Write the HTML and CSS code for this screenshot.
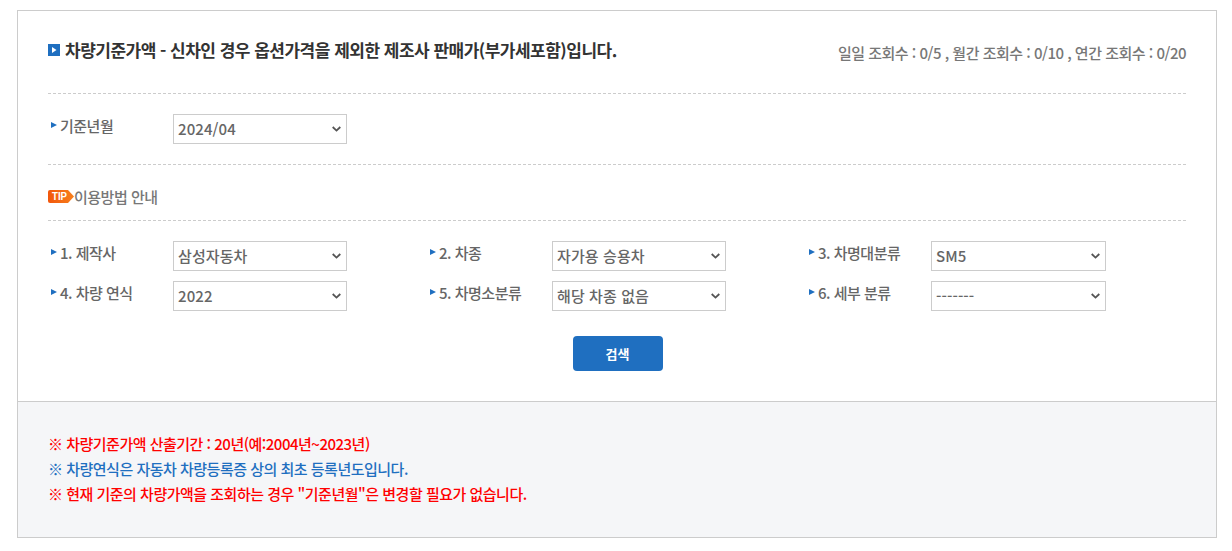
FILE: index.html
```html
<!DOCTYPE html>
<html lang="ko">
<head>
<meta charset="utf-8">
<title>차량기준가액</title>
<link rel="stylesheet" href="styles.css">
</head>
<body>
<div class="box">
  <div class="main">
    <div class="head">
      <h2 class="title">
        <svg class="title-icon" width="12" height="12" viewBox="0 0 12 12"><rect width="12" height="12" fill="#1f6fc0"/><path d="M4 3l4.500 3L4 9z" fill="#fff"/></svg>
        차량기준가액 - 신차인 경우 옵션가격을 제외한 제조사 판매가(부가세포함)입니다.
      </h2>
      <p class="count">일일 조회수 : 0/5 , 월간 조회수 : 0/10 , 연간 조회수 : 0/20</p>
    </div>
    <div class="base-row">
      <div class="field">
        <label class="label">기준년월</label>
        <select class="sel"><option>2024/04</option></select>
      </div>
    </div>
    <div class="tip-row">
      <svg class="tip-icon" width="26" height="13" viewBox="0 0 26 13"><defs><linearGradient id="tipfill" x1="0" y1="0" x2="1" y2="0"><stop offset="0" stop-color="#f2570c"/><stop offset="1" stop-color="#f77f1c"/></linearGradient></defs><path d="M2 0H20L26 6.500L20 13H2Q0 13 0 11V2Q0 0 2 0Z" fill="url(#tipfill)"/><text x="4" y="10" class="tip-text" textLength="15" lengthAdjust="spacingAndGlyphs">TIP</text></svg>
      <span class="tip-label">이용방법 안내</span>
    </div>
    <div class="grid">
      <div class="field"><label class="label">1. 제작사</label><select class="sel"><option>삼성자동차</option></select></div>
      <div class="field"><label class="label">2. 차종</label><select class="sel"><option>자가용 승용차</option></select></div>
      <div class="field"><label class="label">3. 차명대분류</label><select class="sel sel-wide"><option>SM5</option></select></div>
      <div class="field"><label class="label">4. 차량 연식</label><select class="sel"><option>2022</option></select></div>
      <div class="field"><label class="label">5. 차명소분류</label><select class="sel"><option>해당 차종 없음</option></select></div>
      <div class="field"><label class="label">6. 세부 분류</label><select class="sel sel-wide"><option>-------</option></select></div>
    </div>
    <div class="actions"><button class="btn" type="button">검색</button></div>
  </div>
  <div class="notes">
    <p class="note red">※ 차량기준가액 산출기간 : 20년(예:2004년~2023년)</p>
    <p class="note blue">※ 차량연식은 자동차 차량등록증 상의 최초 등록년도입니다.</p>
    <p class="note red">※ 현재 기준의 차량가액을 조회하는 경우 "기준년월"은 변경할 필요가 없습니다.</p>
  </div>
</div>
</body>
</html>
```
FILE: styles.css
```css
* { box-sizing: border-box; }
html, body { margin: 0; padding: 0; background: #fff; }
body {
  font-family: "Noto Sans CJK KR", "Noto Sans", sans-serif;
  color: #666;
  font-size: 15px;
}
.box {
  margin: 10px 15px 0 17px;
  height: 528px;
  border: 1px solid #ccc;
  display: flex;
  flex-direction: column;
}
.main { height: 390px; padding: 0 30px; }
.head {
  height: 83px;
  display: flex;
  justify-content: space-between;
  align-items: flex-start;
  border-bottom: 1px dashed #ccc;
}
.title {
  margin: 26px 0 0;
  font-size: 17px;
  line-height: 26px;
  font-weight: 700;
  color: #333;
  letter-spacing: -0.51px;
  display: flex;
  align-items: center;
  gap: 5px;
}
.title-icon { flex: none; }
.count {
  margin: 30px 0 0;
  font-size: 15px;
  line-height: 24px;
  font-weight: 500;
  color: #777;
  letter-spacing: -0.5px;
}
.base-row {
  height: 71px;
  padding-top: 20px;
  border-bottom: 1px dashed #ccc;
}
.field { display: flex; align-items: flex-start; }
.label {
  width: 125px;
  flex: none;
  font-size: 15px;
  line-height: 24px;
  font-weight: 500;
  color: #666;
  padding-left: 12px;
  position: relative;
  letter-spacing: -0.5px;
}
.label::before {
  content: "";
  position: absolute;
  left: 3px;
  top: 8px;
  border-left: 6px solid #1f6fc0;
  border-top: 3.5px solid transparent;
  border-bottom: 3.5px solid transparent;
}
.sel {
  width: 174px;
  height: 30px;
  border: 1px solid #ccc;
  border-radius: 0;
  appearance: none;
  background: #fff url("data:image/svg+xml,%3Csvg xmlns='http://www.w3.org/2000/svg' width='9' height='6' viewBox='0 0 9 6'%3E%3Cpath d='M.7 1L4.500 4.600L8.300 1' fill='none' stroke='%23555' stroke-width='1.800'/%3E%3C/svg%3E") no-repeat right 5px center;
  font-family: inherit;
  font-size: 15px;
  font-weight: 500;
  color: #666;
  padding: 0 0 1px 4px;
  letter-spacing: 0.1px;
}
.sel-wide { width: 175px; }
.tip-row {
  height: 56px;
  border-bottom: 1px dashed #ccc;
  display: flex;
  align-items: flex-start;
  padding-top: 20px;
}
.tip-icon { flex: none; margin-top: 5px; }
.tip-text { font-family: "Liberation Sans", sans-serif; font-size: 10px; font-weight: 700; fill: #fff; }
.tip-label { font-size: 15px; line-height: 24px; font-weight: 500; color: #777; letter-spacing: -0.5px; }
.grid {
  display: grid;
  grid-template-columns: 379px 379px 1fr;
  row-gap: 10px;
  padding-top: 20px;
}
.actions { display: flex; justify-content: center; padding: 25px 0 0 1px; }
.btn {
  width: 90px;
  height: 35px;
  border: 0;
  border-radius: 4px;
  background: #1f6fc0;
  color: #fff;
  font-family: inherit;
  font-size: 13px;
  font-weight: 700;
  padding: 0;
}
.notes {
  flex: 1;
  background: #f5f6f8;
  border-top: 1px solid #ccc;
  padding: 29px 30px 0;
}
.note {
  margin: 0;
  font-size: 15px;
  line-height: 25px;
  font-weight: 500;
  letter-spacing: -0.5px;
}
.red { color: #f00; }
.blue { color: #1f6fc0; }
```
